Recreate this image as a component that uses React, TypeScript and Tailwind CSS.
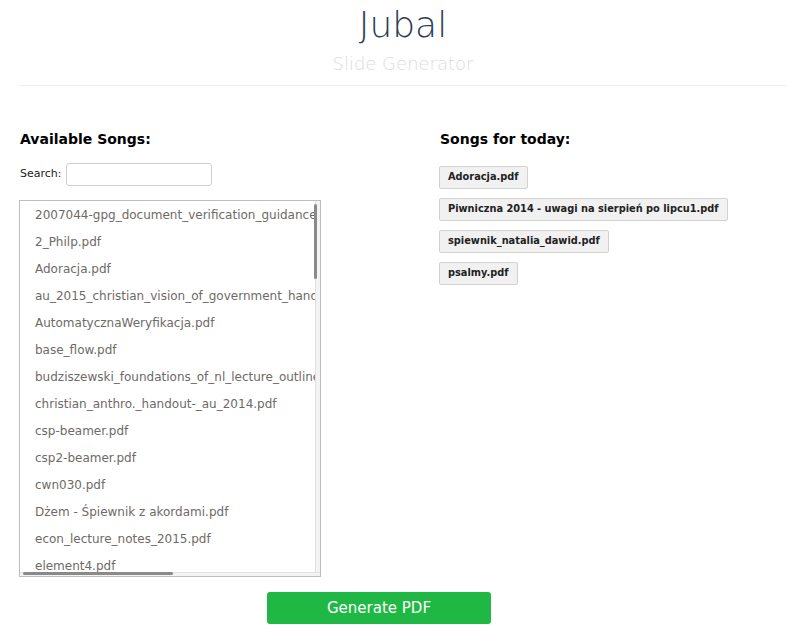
import React from "react";

const songs = [
  "2007044-gpg_document_verification_guidance.pdf",
  "2_Philp.pdf",
  "Adoracja.pdf",
  "au_2015_christian_vision_of_government_handout.pdf",
  "AutomatycznaWeryfikacja.pdf",
  "base_flow.pdf",
  "budziszewski_foundations_of_nl_lecture_outline.pdf",
  "christian_anthro._handout-_au_2014.pdf",
  "csp-beamer.pdf",
  "csp2-beamer.pdf",
  "cwn030.pdf",
  "Dżem - Śpiewnik z akordami.pdf",
  "econ_lecture_notes_2015.pdf",
  "element4.pdf",
  "Eucharystia.pdf",
];

const today = [
  "Adoracja.pdf",
  "Piwniczna 2014 - uwagi na sierpień po lipcu1.pdf",
  "spiewnik_natalia_dawid.pdf",
  "psalmy.pdf",
];

export default function App() {
  return (
    <div
      className="w-[789px] h-[637px] bg-white overflow-hidden"
      style={{ fontFamily: '"DejaVu Sans", Verdana, sans-serif' }}
    >
      <header className="pt-[3px] pl-[17px] flex flex-col items-center">
        <h1 className="text-[36px] leading-[43px] font-extralight text-[#2c3e50]">Jubal</h1>
        <div className="mt-[6px] text-[18px] leading-[23px] font-extralight text-[#dcdcdc]">
          Slide Generator
        </div>
      </header>
      <div className="mt-[10px] ml-[19px] mr-[2px] h-px bg-[#eeeeee]" />

      <div className="flex pl-[20px] mt-[44px]">
        <div className="w-[420px] shrink-0">
          <h2 className="text-[14px] leading-[18px] font-bold text-black">Available Songs:</h2>
          <div className="mt-[15px] flex items-center">
            <span className="text-[11px] text-[#222]">Search:</span>
            <input
              className="ml-[4px] w-[146px] h-[23px] border border-[#cfcfcf] rounded-[3px] outline-none bg-white"
              type="text"
            />
          </div>
          <div className="relative mt-[14px] -ml-[1px] w-[302px] h-[377px] border border-[#bdbdbd] bg-white overflow-hidden">
            <ul className="pt-0">
              {songs.map((s) => (
                <li
                  key={s}
                  className="h-[27px] flex items-center pl-[15px] text-[12px] text-[#6e6a66] whitespace-nowrap"
                >
                  {s}
                </li>
              ))}
            </ul>
            <div className="absolute top-0 right-0 w-[5px] h-full bg-[#f3f3f3] border-l border-[#e2e2e2]" />
            <div className="absolute top-[3px] right-[3px] w-[3px] h-[75px] bg-[#8a8a8a] rounded-sm" />
            <div className="absolute left-0 bottom-0 h-[4px] w-full bg-[#f3f3f3] border-t border-[#e2e2e2]" />
            <div className="absolute left-[3px] bottom-[1px] h-[3px] w-[150px] bg-[#8a8a8a] rounded-sm" />
          </div>
        </div>
        <div className="flex-1">
          <h2 className="text-[14px] leading-[18px] font-bold text-black">Songs for today:</h2>
          <div className="mt-[18px] -ml-[1px] flex flex-col items-start gap-[9px]">
            {today.map((s) => (
              <button
                key={s}
                className="h-[23px] px-[8px] border border-[#d2d2d2] rounded-[2px] bg-[#f1f1f1] text-[9.8px] font-bold text-[#222] whitespace-nowrap"
              >
                {s}
              </button>
            ))}
          </div>
        </div>
      </div>

      <div className="pl-[267px] mt-[15px]">
        <button className="w-[224px] h-[32px] rounded-[3px] bg-[#1fb845] text-white text-[15px]">
          Generate PDF
        </button>
      </div>
    </div>
  );
}
